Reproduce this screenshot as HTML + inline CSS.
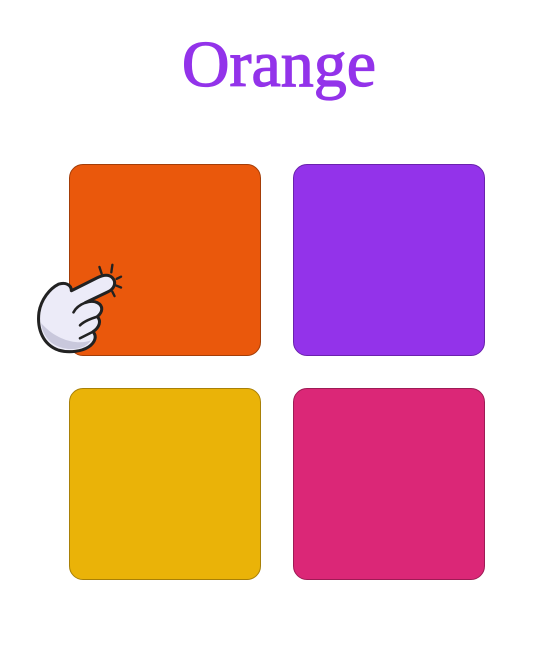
<!DOCTYPE html>
<html><head><style>
html,body{margin:0;padding:0;background:#fff;width:558px;height:650px;overflow:hidden;position:relative}
h1{position:absolute;left:0;width:558px;top:25px;margin:0;text-align:center;font-family:"Liberation Serif",serif;font-weight:normal;font-size:66px;line-height:80px;color:#9333ea;-webkit-text-stroke:1.2px #9333ea}
.sq{position:absolute;border-radius:14px;box-sizing:border-box}
</style></head><body>
<h1>Orange</h1>
<div class="sq" style="left:69px;top:164px;width:192px;height:192px;background:#ea580c;border:1px solid #a33d08"></div>
<div class="sq" style="left:293px;top:164px;width:192px;height:192px;background:#9333ea;border:1px solid #6a22ad"></div>
<div class="sq" style="left:69px;top:388px;width:192px;height:192px;background:#eab308;border:1px solid #a88007"></div>
<div class="sq" style="left:293px;top:388px;width:192px;height:192px;background:#db2777;border:1px solid #9e1b55"></div>
<svg style="position:absolute;left:30px;top:260px" width="110" height="100" viewBox="0 0 110 100">
<g transform="translate(-4,-6) scale(1.08)">
<g stroke="#222" stroke-width="2.2" stroke-linecap="round" fill="none">
<path d="M68 12 L70 18 M80 10 L79 17 M88 21 L84 23 M88 31 L83 29 M82 39 L80 35"/>
</g>
<path d="M30 28 C22 32 14 42 12 54 C10 70 16 84 30 89 C40 92 52 90 58 86 C64 82 66 76 62 72 C68 68 70 62 66 58 C71 54 72 48 66 45 C62 43 58 44 55 45 L76 35 C82 32 84 26 80 22 C76 18 70 20 66 22 L42 34 C42 28 36 26 30 28 Z" fill="#ecebf8" stroke="#222" stroke-width="2.8" stroke-linejoin="round"/>
<path d="M14 64 C16 80 28 88 42 88 C52 88 58 84 60 80 C50 84 30 82 14 64 Z" fill="#c9c8dc"/>
<path d="M55 45 C50 47 46 50 44 54 M66 58 C60 60 54 62 50 66 M62 72 C58 74 54 76 50 78" stroke="#222" stroke-width="2.4" fill="none" stroke-linecap="round"/>
</g>
</svg>
</body></html>
